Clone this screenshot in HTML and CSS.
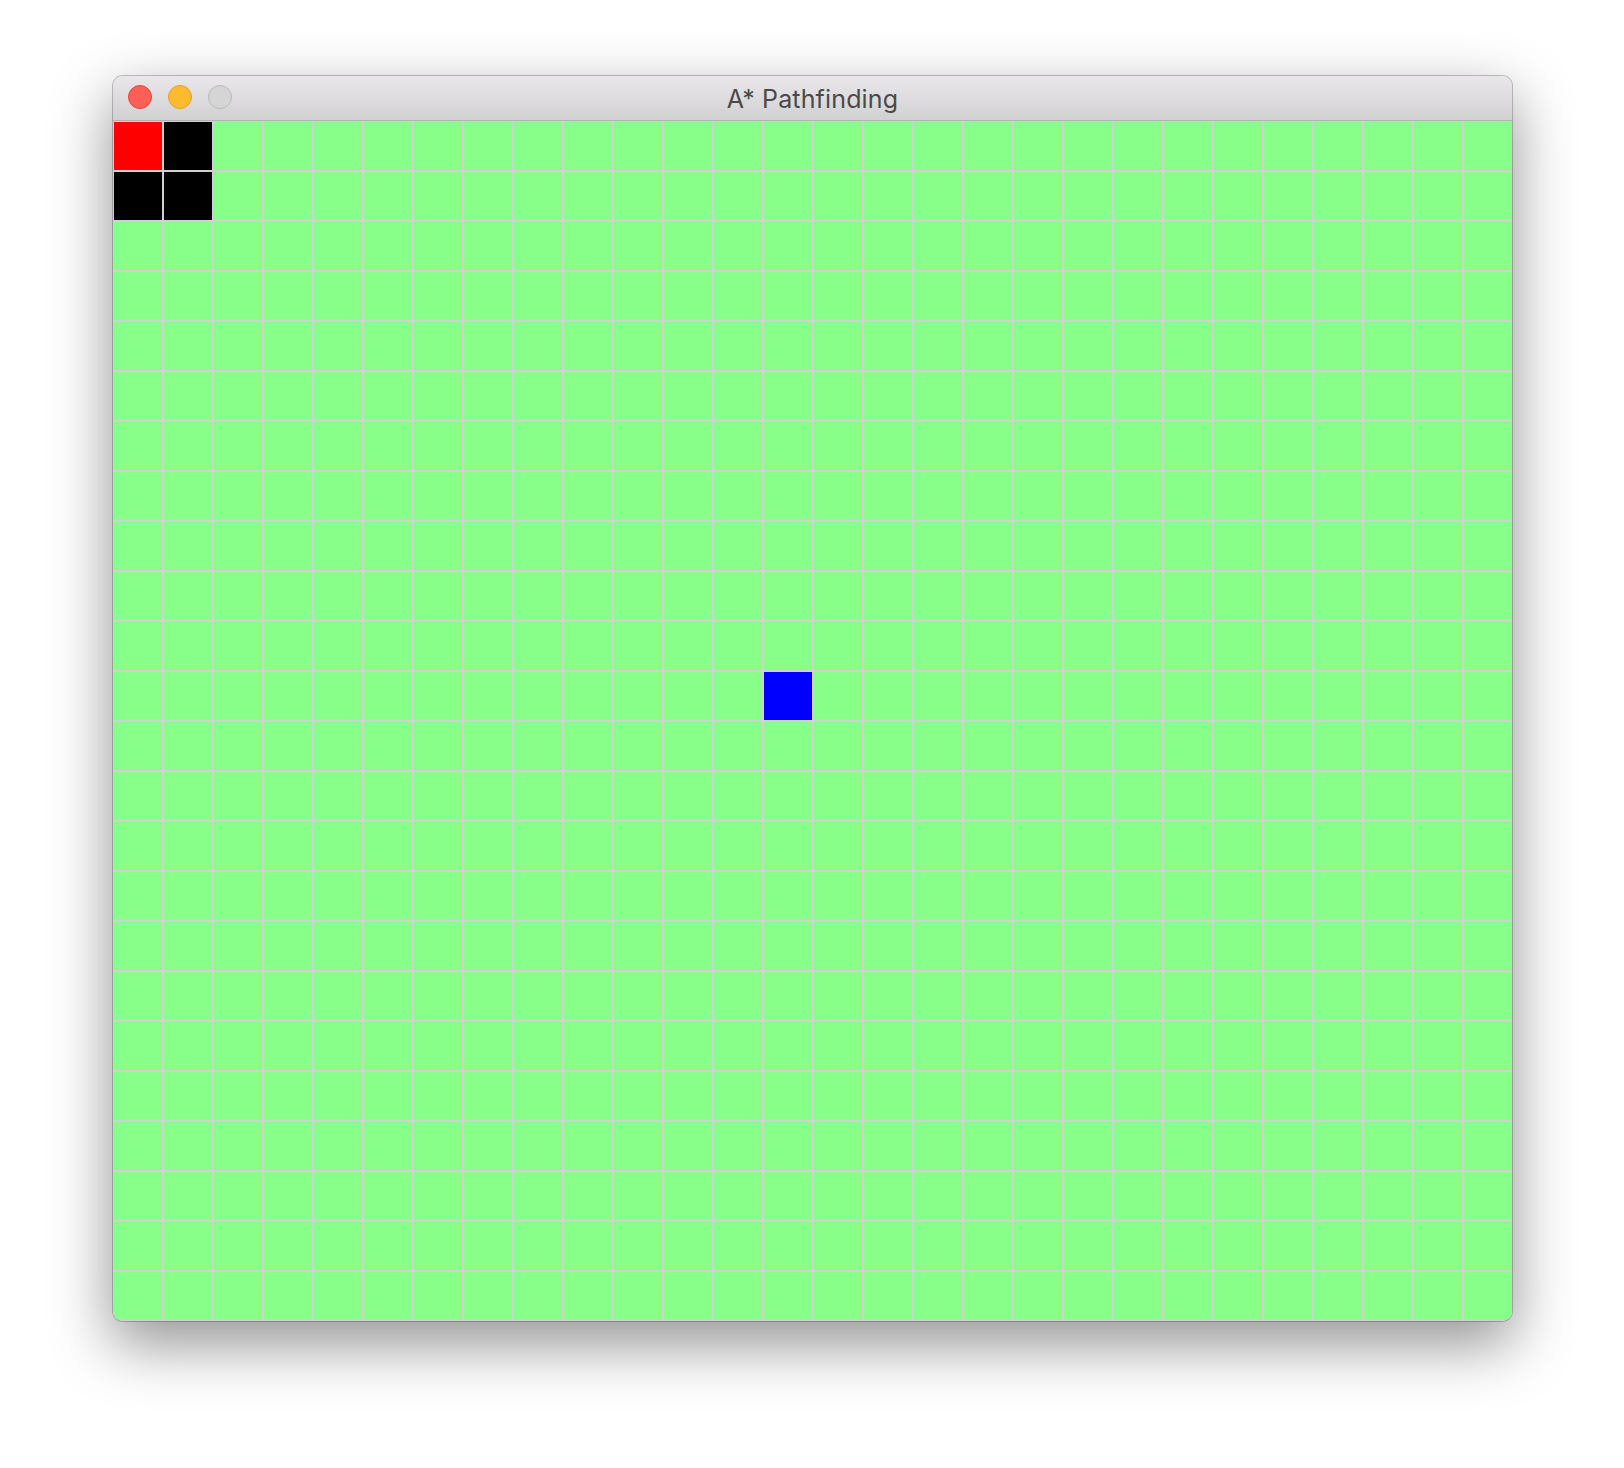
FILE: index.html
```html
<!DOCTYPE html>
<html>
<head>
<meta charset="utf-8">
<title>A* Pathfinding</title>
<link rel="stylesheet" href="styles.css">
</head>
<body>
<div class="window">
  <div class="titlebar">
    <div class="lights">
      <span class="light close"></span>
      <span class="light minimize"></span>
      <span class="light zoom"></span>
    </div>
    <div class="title">A* Pathfinding</div>
  </div>
  <div class="grid" id="grid"></div>
</div>
<script src="script.js"></script>
</body>
</html>
```
FILE: styles.css
```css
html, body {
  margin: 0;
  padding: 0;
  background: #ffffff;
}
body {
  width: 1624px;
  height: 1468px;
  padding: 76px 0 0 113px;
  box-sizing: border-box;
  font-family: "Inter", "Liberation Sans", sans-serif;
}
.window {
  width: 1399px;
  border-radius: 10px;
  overflow: hidden;
  box-shadow: 0 0 0 1px rgba(0,0,0,0.22), 0 22px 60px 2px rgba(0,0,0,0.42);
  display: flex;
  flex-direction: column;
}
.titlebar {
  height: 44px;
  background: linear-gradient(#e9e7e9, #d2d1d2);
  border-bottom: 1px solid #b1b1b1;
  display: flex;
  align-items: center;
  justify-content: center;
  position: relative;
}
.lights {
  position: absolute;
  left: 15px;
  top: 9px;
  display: flex;
  gap: 16px;
}
.light {
  width: 22px;
  height: 22px;
  border-radius: 50%;
  display: block;
}
.close { background: #fe5f57; border: 1px solid #e1463f; }
.minimize { background: #febb2e; border: 1px solid #e0a02a; }
.zoom { background: #d6d5d6; border: 1px solid #b9b8b9; }
.title {
  font-size: 25px;
  color: #4a4a4a;
  letter-spacing: 0.15px;
  padding-top: 2px;
}
.grid {
  display: grid;
  grid-template-columns: repeat(28, 48px);
  grid-template-rows: repeat(24, 48px);
  gap: 2px;
  padding: 1px 0 1px 1px;
  background: #d3d0d3;
}
.cell { background: #88ff88; }
.cell.start { background: #ff0000; }
.cell.wall { background: #000000; }
.cell.goal { background: #0000ff; }
```
FILE: script.js
```js
(function () {
  var grid = document.getElementById('grid');
  var special = {
    '0,0': 'start',
    '0,1': 'wall',
    '1,0': 'wall',
    '1,1': 'wall',
    '11,13': 'goal'
  };
  for (var r = 0; r < 24; r++) {
    for (var c = 0; c < 28; c++) {
      var d = document.createElement('div');
      d.className = 'cell' + (special[r + ',' + c] ? ' ' + special[r + ',' + c] : '');
      grid.appendChild(d);
    }
  }
})();
```
